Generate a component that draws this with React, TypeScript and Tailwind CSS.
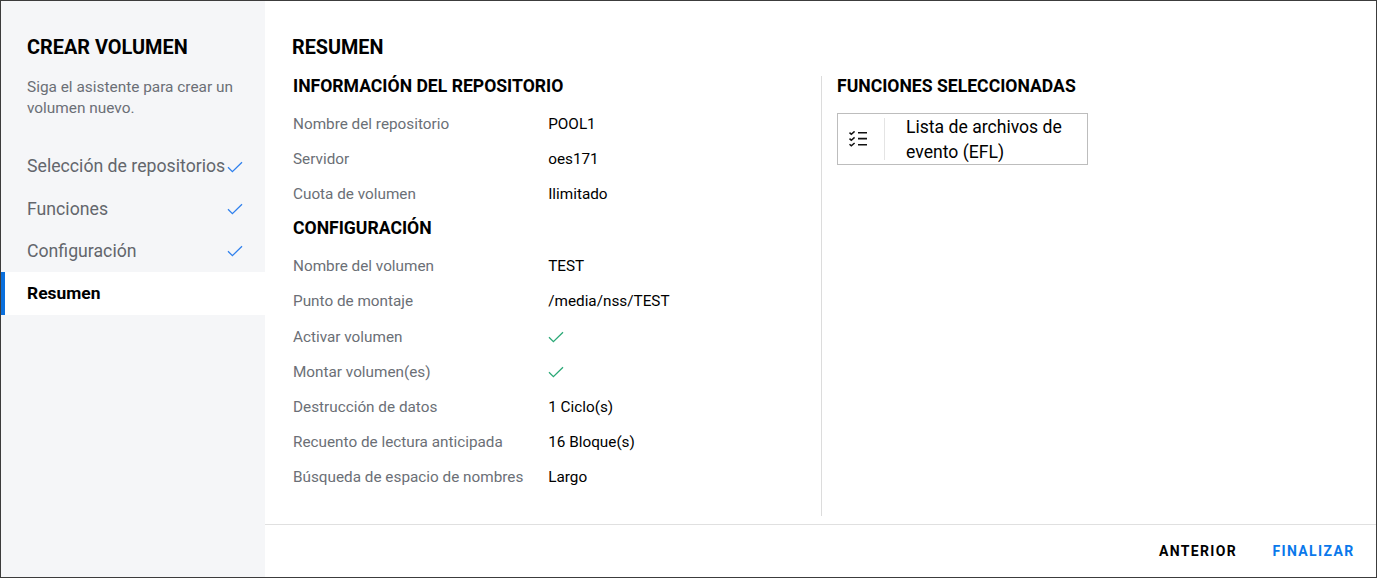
import React from "react";

const Check = ({ color }: { color: string }) => (
  <svg width="16" height="12" viewBox="0 0 16 12" fill="none" stroke={color} strokeWidth="1.3" className="shrink-0">
    <path d="M1 6.2 L5.4 10.6 L15 1.2" />
  </svg>
);

const Row = ({ label, short, children }: { label: string; short?: boolean; children: React.ReactNode }) => (
  <div className={short ? "flex items-center h-[35px] text-[15.3px]" : "flex items-center h-[35.2px] text-[15.3px]"}>
    <div className="w-[255.2px] text-[#6b6f76] whitespace-nowrap">{label}</div>
    <div className="text-black">{children}</div>
  </div>
);

const Step = ({ label, first }: { label: string; first?: boolean }) => (
  <div className={first ? "flex items-center justify-between h-[43px] pl-[26px] pr-[22px] text-[17.7px] text-[#63666c]" : "flex items-center justify-between h-[42.25px] pl-[26px] pr-[22px] text-[17.7px] text-[#63666c]"}>
    <span className="whitespace-nowrap">{label}</span>
    <Check color="#2f80ed" />
  </div>
);

export default function App() {
  return (
    <div className="w-[1377px] h-[578px] border border-[#3c3c3c] flex bg-white overflow-hidden font-['Roboto',sans-serif]">
      <aside className="w-[264px] shrink-0 bg-[#f5f6f8] flex flex-col">
        <h1 className="pl-[26px] pt-[34.5px] text-[19.9px] leading-[24px] font-bold text-black">CREAR VOLUMEN</h1>
        <p className="pl-[26px] pt-[17.5px] pr-[20px] text-[15.4px] leading-[21px] text-[#6b6f76]">
          Siga el asistente para crear un volumen nuevo.
        </p>
        <div className="mt-[26px]">
          <Step first label="Selección de repositorios" />
          <Step label="Funciones" />
          <Step label="Configuración" />
          <div className="flex items-center h-[43px] -mt-px bg-white border-l-4 border-[#0a6fdc] pl-[22px] text-[17.4px] font-bold text-black">
            Resumen
          </div>
        </div>
      </aside>
      <div className="flex-1 flex flex-col min-w-0">
        <main className="flex-1 min-h-0 flex flex-col pl-[27px]">
          <h2 className="pt-[35px] text-[19.8px] leading-[24px] font-bold text-black">RESUMEN</h2>
          <div className="flex mt-[16px]">
            <section className="w-[530px] h-[440px] border-r border-[#dcdcdc] pl-px">
              <h3 className="text-[17.6px] leading-[20px] font-bold text-black mb-[11px]">INFORMACIÓN DEL REPOSITORIO</h3>
              <Row short label="Nombre del repositorio">POOL1</Row>
              <Row short label="Servidor">oes171</Row>
              <Row short label="Cuota de volumen">Ilimitado</Row>
              <h3 className="text-[17.6px] leading-[20px] font-bold text-black mt-[5.5px] mb-[11.6px]">CONFIGURACIÓN</h3>
              <Row label="Nombre del volumen">TEST</Row>
              <Row label="Punto de montaje">/media/nss/TEST</Row>
              <Row label="Activar volumen"><Check color="#2aa876" /></Row>
              <Row label="Montar volumen(es)"><Check color="#2aa876" /></Row>
              <Row label="Destrucción de datos">1 Ciclo(s)</Row>
              <Row label="Recuento de lectura anticipada">16 Bloque(s)</Row>
              <Row label="Búsqueda de espacio de nombres">Largo</Row>
            </section>
            <section className="pl-[15px]">
              <h3 className="text-[17.6px] leading-[20px] font-bold text-black">FUNCIONES SELECCIONADAS</h3>
              <div className="mt-[17px] w-[251px] h-[52px] border border-[#bdbdbd] flex items-center">
                <div className="w-[47px] h-[42px] border-r border-[#e4e4e4] flex items-center justify-center shrink-0 pr-[6px]">
                  <svg width="20" height="16" viewBox="0 0 20 16" fill="none" stroke="#111" strokeWidth="1.5">
                    <path d="M1.5 1.6 L3.3 3.2 L6.6 0.4" />
                    <path d="M1.5 7.6 L3.3 9.2 L6.6 6.4" />
                    <path d="M1.5 13.2 L3.3 14.8 L6.6 12" />
                    <path d="M10 1.7 H19 M10 7.6 H19 M10 13.8 H19" strokeWidth="1.6" />
                  </svg>
                </div>
                <div className="pl-[21px] pt-[1.5px] text-[17.6px] leading-[25px] text-black">
                  Lista de archivos de<br />evento (EFL)
                </div>
              </div>
            </section>
          </div>
        </main>
        <footer className="h-[53px] border-t border-[#e0e0e0] flex items-center justify-end gap-[35.5px] pr-[21.5px] text-[14px] font-bold tracking-[1.35px]">
          <span className="text-black">ANTERIOR</span>
          <span className="text-[#0a78eb]">FINALIZAR</span>
        </footer>
      </div>
    </div>
  );
}
